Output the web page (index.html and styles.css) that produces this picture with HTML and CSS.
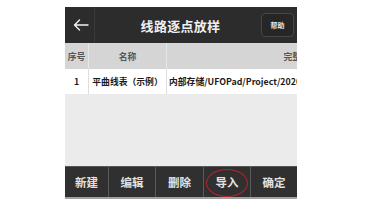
FILE: index.html
```html
<!DOCTYPE html>
<html lang="zh">
<head>
<meta charset="utf-8">
<link rel="stylesheet" href="styles.css">
</head>
<body>
<div class="screen">
  <div class="topbar">
    <div class="back">
      <svg width="16" height="12" viewBox="0 0 16 12"><path d="M15 6H1.5M6.5 1L1.5 6l5 5" fill="none" stroke="#f2f2f2" stroke-width="1.4" stroke-linecap="round" stroke-linejoin="round"/></svg>
    </div>
    <div class="title">线路逐点放样</div>
    <div class="help-cell"><div class="help">帮助</div></div>
  </div>
  <div class="table">
    <div class="row head">
      <div class="c c1">序号</div>
      <div class="c c2">名称</div>
      <div class="c c3">完整路径</div>
    </div>
    <div class="row data">
      <div class="c c1">1</div>
      <div class="c c2">平曲线表（示例）</div>
      <div class="c c3 left">内部存储/UFOPad/Project/2020/平曲线表（示例）</div>
    </div>
  </div>
  <div class="empty"></div>
  <div class="bottombar">
    <div class="btn">新建</div>
    <div class="btn">编辑</div>
    <div class="btn">删除</div>
    <div class="btn marked">导入<span class="ring"></span></div>
    <div class="btn">确定</div>
  </div>
</div>
</body>
</html>
```
FILE: styles.css
```css
html, body {
  margin: 0;
  padding: 0;
  background: #ffffff;
}
body {
  font-family: "Noto Sans CJK SC", "Noto Sans", sans-serif;
}
.screen {
  margin: 7px 0 0 65px;
  width: 232px;
  overflow: hidden;
  background: #ebebeb;
}
.topbar {
  height: 36px;
  background: #2c2c2c;
  display: grid;
  grid-template-columns: 30px 1fr 36px;
  align-items: center;
}
.back {
  height: 100%;
  display: flex;
  align-items: center;
  padding-left: 8px;
  border-right: 1px solid #3a3a3a;
  box-sizing: border-box;
}
.back svg { display: block; }
.title {
  text-align: center;
  color: #f0f0f0;
  font-size: 13px;
  font-weight: bold;
  padding-left: 5px;
  letter-spacing: 0.3px;
}
.help-cell {
  display: flex;
  justify-content: flex-start;
}
.help {
  width: 33px;
  height: 24px;
  border: 1px solid #474747;
  border-radius: 4px;
  box-sizing: border-box;
  background: #262626;
  color: #e8e8e8;
  font-size: 7px;
  font-weight: bold;
  display: flex;
  align-items: center;
  justify-content: center;
}
.table {
  width: 232px;
  overflow: hidden;
}
.row {
  display: flex;
  white-space: nowrap;
}
.row.head {
  height: 26px;
  background: #d5d5d5;
  color: #555555;
}
.row.data {
  height: 25px;
  background: #ffffff;
  color: #1a1a1a;
}
.c {
  flex: none;
  display: flex;
  align-items: center;
  justify-content: center;
  font-size: 8.8px;
  font-weight: bold;
  box-sizing: border-box;
}
.c1 { width: 24px; }
.c2 { width: 78px; }
.c3 { width: 268px; }
.head .c1, .head .c2 { border-right: 1px solid #e6e6e6; }
.data .c1, .data .c2 { border-right: 1px solid #dedede; }
.c.left {
  justify-content: flex-start;
  padding-left: 2px;
}
.empty {
  height: 72px;
  background: #ebebeb;
}
.bottombar {
  height: 30px;
  background: #303030;
  border-top: 1px solid #555555;
  border-bottom: 2px solid #a0a0a0;
  display: grid;
  grid-template-columns: 44px 47px 48px 47px 1fr;
}
.btn {
  position: relative;
  display: flex;
  align-items: center;
  justify-content: center;
  color: #e2e2e2;
  font-size: 11.5px;
  font-weight: bold;
  border-right: 1px solid #5a5a5a;
}
.btn:last-child { border-right: none; }
.ring {
  position: absolute;
  left: 2px;
  top: 2px;
  width: 42px;
  height: 28px;
  border: 1.5px solid #b7242b;
  border-radius: 50%;
  box-sizing: border-box;
}
```
